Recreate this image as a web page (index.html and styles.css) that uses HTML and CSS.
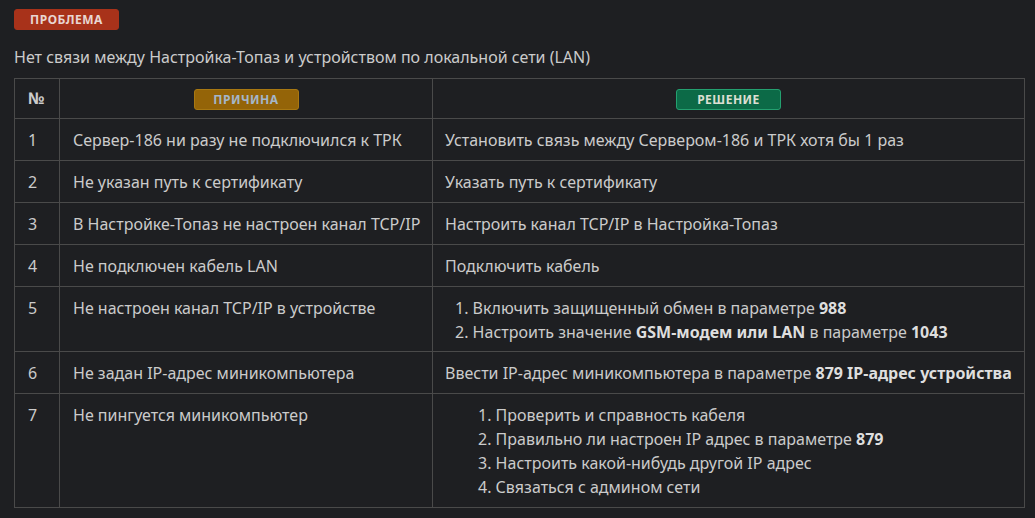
FILE: index.html
```html
<!DOCTYPE html>
<html lang="ru">
<head>
<meta charset="utf-8">
<link rel="stylesheet" href="styles.css">
</head>
<body>
<div class="page">
  <div class="badge badge-problem">ПРОБЛЕМА</div>
  <p class="title">Нет связи между Настройка-Топаз и устройством по локальной сети (LAN)</p>
  <table class="grid">
    <colgroup>
      <col class="c-num">
      <col class="c-cause">
      <col class="c-fix">
    </colgroup>
    <thead>
      <tr>
        <th class="num">№</th>
        <th class="cause"><span class="badge badge-cause">ПРИЧИНА</span></th>
        <th class="fix"><span class="badge badge-fix">РЕШЕНИЕ</span></th>
      </tr>
    </thead>
    <tbody>
      <tr>
        <td class="num">1</td>
        <td class="cause">Сервер-186 ни разу не подключился к ТРК</td>
        <td class="fix">Установить связь между Сервером-186 и ТРК хотя бы 1 раз</td>
      </tr>
      <tr>
        <td class="num">2</td>
        <td class="cause">Не указан путь к сертификату</td>
        <td class="fix">Указать путь к сертификату</td>
      </tr>
      <tr>
        <td class="num">3</td>
        <td class="cause">В Настройке-Топаз не настроен канал TCP/IP</td>
        <td class="fix">Настроить канал TCP/IP в Настройка-Топаз</td>
      </tr>
      <tr>
        <td class="num">4</td>
        <td class="cause">Не подключен кабель LAN</td>
        <td class="fix">Подключить кабель</td>
      </tr>
      <tr>
        <td class="num">5</td>
        <td class="cause">Не настроен канал TCP/IP в устройстве</td>
        <td class="fix">
          <ol class="steps steps-short">
            <li>Включить защищенный обмен в параметре <b>988</b></li>
            <li>Настроить значение <b>GSM-модем или LAN</b> в параметре <b>1043</b></li>
          </ol>
        </td>
      </tr>
      <tr>
        <td class="num">6</td>
        <td class="cause">Не задан IP-адрес миникомпьютера</td>
        <td class="fix">Ввести IP-адрес миникомпьютера в параметре <b>879 IP-адрес устройства</b></td>
      </tr>
      <tr>
        <td class="num">7</td>
        <td class="cause">Не пингуется миникомпьютер</td>
        <td class="fix">
          <ol class="steps steps-long">
            <li>Проверить и справность кабеля</li>
            <li>Правильно ли настроен IP адрес в параметре <b>879</b></li>
            <li>Настроить какой-нибудь другой IP адрес</li>
            <li>Связаться с админом сети</li>
          </ol>
        </td>
      </tr>
    </tbody>
  </table>
</div>
</body>
</html>
```

FILE: styles.css
```css
html, body {
  margin: 0;
  padding: 0;
  background: #1e1f22;
}

body {
  font-family: "Noto Sans", "Open Sans", "DejaVu Sans", sans-serif;
  font-size: 16px;
  color: #cbcbcb;
}

.page {
  padding: 9px 11px 0 14px;
}

.badge {
  display: inline-block;
  box-sizing: border-box;
  width: 105px;
  height: 21px;
  line-height: 19px;
  border-radius: 3px;
  border: 1px solid transparent;
  font-size: 12px;
  font-weight: 700;
  text-align: center;
  letter-spacing: 0.5px;
  vertical-align: middle;
}

.badge-problem {
  display: block;
  background: #a8321a;
  border-color: #a8321a;
  color: #e8d6d2;
}

.badge-cause {
  background: #946408;
  border-color: #a87812;
  color: #a4b6ca;
}

.badge-fix {
  background: #0c6a47;
  border-color: #24a070;
  color: #dcdfd2;
}

.title {
  margin: 15px 0 9px;
  line-height: 24px;
  color: #cbcbcb;
}

.grid {
  width: 1010px;
  border-collapse: collapse;
  table-layout: fixed;
}

.c-num { width: 45px; }
.c-cause { width: 373px; }
.c-fix { width: 592px; }

.grid th,
.grid td {
  border: 1px solid #4a4a4a;
  text-align: left;
  vertical-align: top;
  line-height: 24px;
  padding: 9px 13px 8px;
  font-weight: 400;
  white-space: nowrap;
}

.grid th {
  height: 24px;
  padding: 7px 13px 8px;
  vertical-align: middle;
}

.grid th.num {
  font-weight: 700;
  color: #cbcbcb;
}

.grid th.cause,
.grid th.fix {
  text-align: center;
}

.grid td.fix {
  padding-left: 12px;
  padding-right: 4px;
}

.grid b {
  font-weight: 700;
  color: #dedede;
}

.steps {
  margin: 0;
  padding: 0;
  list-style-position: inside;
}

.steps-short {
  padding-left: 10px;
  margin-bottom: -1px;
}

.steps-long { padding-left: 33px; }
```
